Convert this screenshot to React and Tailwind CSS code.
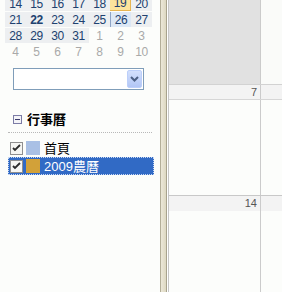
import React from 'react'

const weeks = [
  [14, 15, 16, 17, 18, 19, 20],
  [21, 22, 23, 24, 25, 26, 27],
  [28, 29, 30, 31, 1, 2, 3],
  [4, 5, 6, 7, 8, 9, 10],
]

const Check = () => (
  <div className="w-[13px] h-[13px] border border-[#8f8f8f] bg-[#f6f6f3] flex items-center justify-center">
    <svg width="9" height="8" viewBox="0 0 9 8">
      <path d="M1 4 L3 6 L8 1" fill="none" stroke="#2b2b2b" strokeWidth="1.8" />
    </svg>
  </div>
)

const MiniCalendar = () => (
  <div className="pl-[5px] -mt-[4px]">
    {weeks.map((week, wi) => (
      <div key={wi} className="flex h-[15px] mb-[1px]">
        {week.map((d, di) => {
          const inMonth = wi < 2 || (wi === 2 && di < 4)
          const isToday = wi === 0 && d === 19
          const isSel = wi === 1 && d === 26
          let cls = 'w-[21px] h-[15px] flex items-center justify-center text-[12px] tracking-[-0.4px] leading-none '
          if (isToday) cls += 'bg-[#fce49c] border-r border-b border-[#e7b552] text-[#20416f]'
          else if (isSel) cls += 'bg-[#dde8f5] border-l border-[#8ea4c6] text-[#20416f]'
          else if (inMonth) cls += 'bg-[#edeff1] text-[#20416f]'
          else cls += 'text-[#a9a9a9]'
          if (d === 22 && wi === 1) cls += ' font-bold'
          return (
            <div key={di} className={cls}>
              {d}
            </div>
          )
        })}
      </div>
    ))}
  </div>
)

export default function App() {
  return (
    <div
      className="flex w-[282px] h-[292px] overflow-hidden bg-[#fcfdfb]"
      style={{ fontFamily: '"Liberation Sans", "Noto Sans CJK TC", sans-serif' }}
    >
      {/* left pane */}
      <div className="w-[160px] shrink-0 bg-[#fcfdfb]">
        <MiniCalendar />

        {/* select */}
        <div className="ml-[13px] mt-[9px] w-[131px] h-[22px] border border-[#7f9db9] bg-white flex justify-end items-start p-[1px]">
          <div className="w-[15px] h-[18px] rounded-[2px] border border-[#bccffa] bg-gradient-to-b from-[#d3e0fd] to-[#b2c6f5] flex items-center justify-center">
            <svg width="9" height="6" viewBox="0 0 9 6">
              <path d="M1 1 L4.5 4.5 L8 1" fill="none" stroke="#4d6185" strokeWidth="2" />
            </svg>
          </div>
        </div>

        {/* calendars header */}
        <div className="flex items-center ml-[13px] mt-[23px] h-[13px]">
          <div className="w-[9px] h-[9px] border border-[#7c7ca6] bg-[#f4f4f8] flex items-center justify-center">
            <div className="w-[5px] h-[1px] bg-[#3c3c6c]" />
          </div>
          <span className="ml-[5px] text-[13px] font-bold text-black leading-none">行事曆</span>
        </div>
        <div className="ml-[8px] mt-[6px] w-[144px] border-t border-dotted border-[#b8b8b8]" />

        {/* calendar list */}
        <div className="mt-[8px] ml-[10px] flex items-center h-[14px]">
          <Check />
          <div className="ml-[3px] w-[14px] h-[14px] bg-[#a9c0e5]" />
          <span className="ml-[4px] text-[13px] text-black leading-none">首頁</span>
        </div>
        <div className="mt-[2px] ml-[8px] w-[146px] h-[18px] bg-[#316ac5] border border-dotted border-[#c8d8f4] flex items-center pl-[1px]">
          <Check />
          <div className="ml-[3px] w-[14px] h-[14px] bg-[#d2a139]" />
          <span className="ml-[4px] text-[13px] text-white leading-none">2009農曆</span>
        </div>
      </div>

      {/* splitter */}
      <div className="flex shrink-0 h-full">
        <div className="w-[1px] bg-[#b3ae98]" />
        <div className="w-[5px] bg-gradient-to-r from-[#ece8d8] to-[#ddd8c2]" />
        <div className="w-[1px] bg-[#a8a38d]" />
        <div className="w-[1px] bg-white" />
      </div>

      {/* month view */}
      <div className="flex-1 border-l border-[#c6c6c6] flex flex-col">
        <div className="flex h-[85px] border-b border-[#d2d2d2]">
          <div className="w-[92px] bg-[#e1e1e1] border-r border-[#cbcbcb]" />
          <div className="flex-1 bg-[#fafbf9]" />
        </div>
        <div className="flex h-[15px] border-b border-[#d6d6d6]">
          <div className="w-[92px] bg-[#f3f3f3] border-r border-[#cbcbcb] text-right pr-[3px] text-[11px] leading-[15px] text-[#555]">7</div>
          <div className="flex-1 bg-[#f3f3f3]" />
        </div>
        <div className="flex h-[96px] border-b border-[#c8c8c8]">
          <div className="w-[92px] bg-[#fcfdfb] border-r border-[#cbcbcb]" />
          <div className="flex-1 bg-[#fcfdfb]" />
        </div>
        <div className="flex h-[15px]">
          <div className="w-[92px] bg-[#f3f3f3] border-r border-[#cbcbcb] text-right pr-[3px] text-[11px] leading-[15px] text-[#555]">14</div>
          <div className="flex-1 bg-[#f3f3f3]" />
        </div>
        <div className="flex flex-1">
          <div className="w-[92px] bg-[#fcfdfb] border-r border-[#cbcbcb]" />
          <div className="flex-1 bg-[#fcfdfb]" />
        </div>
      </div>
    </div>
  )
}
